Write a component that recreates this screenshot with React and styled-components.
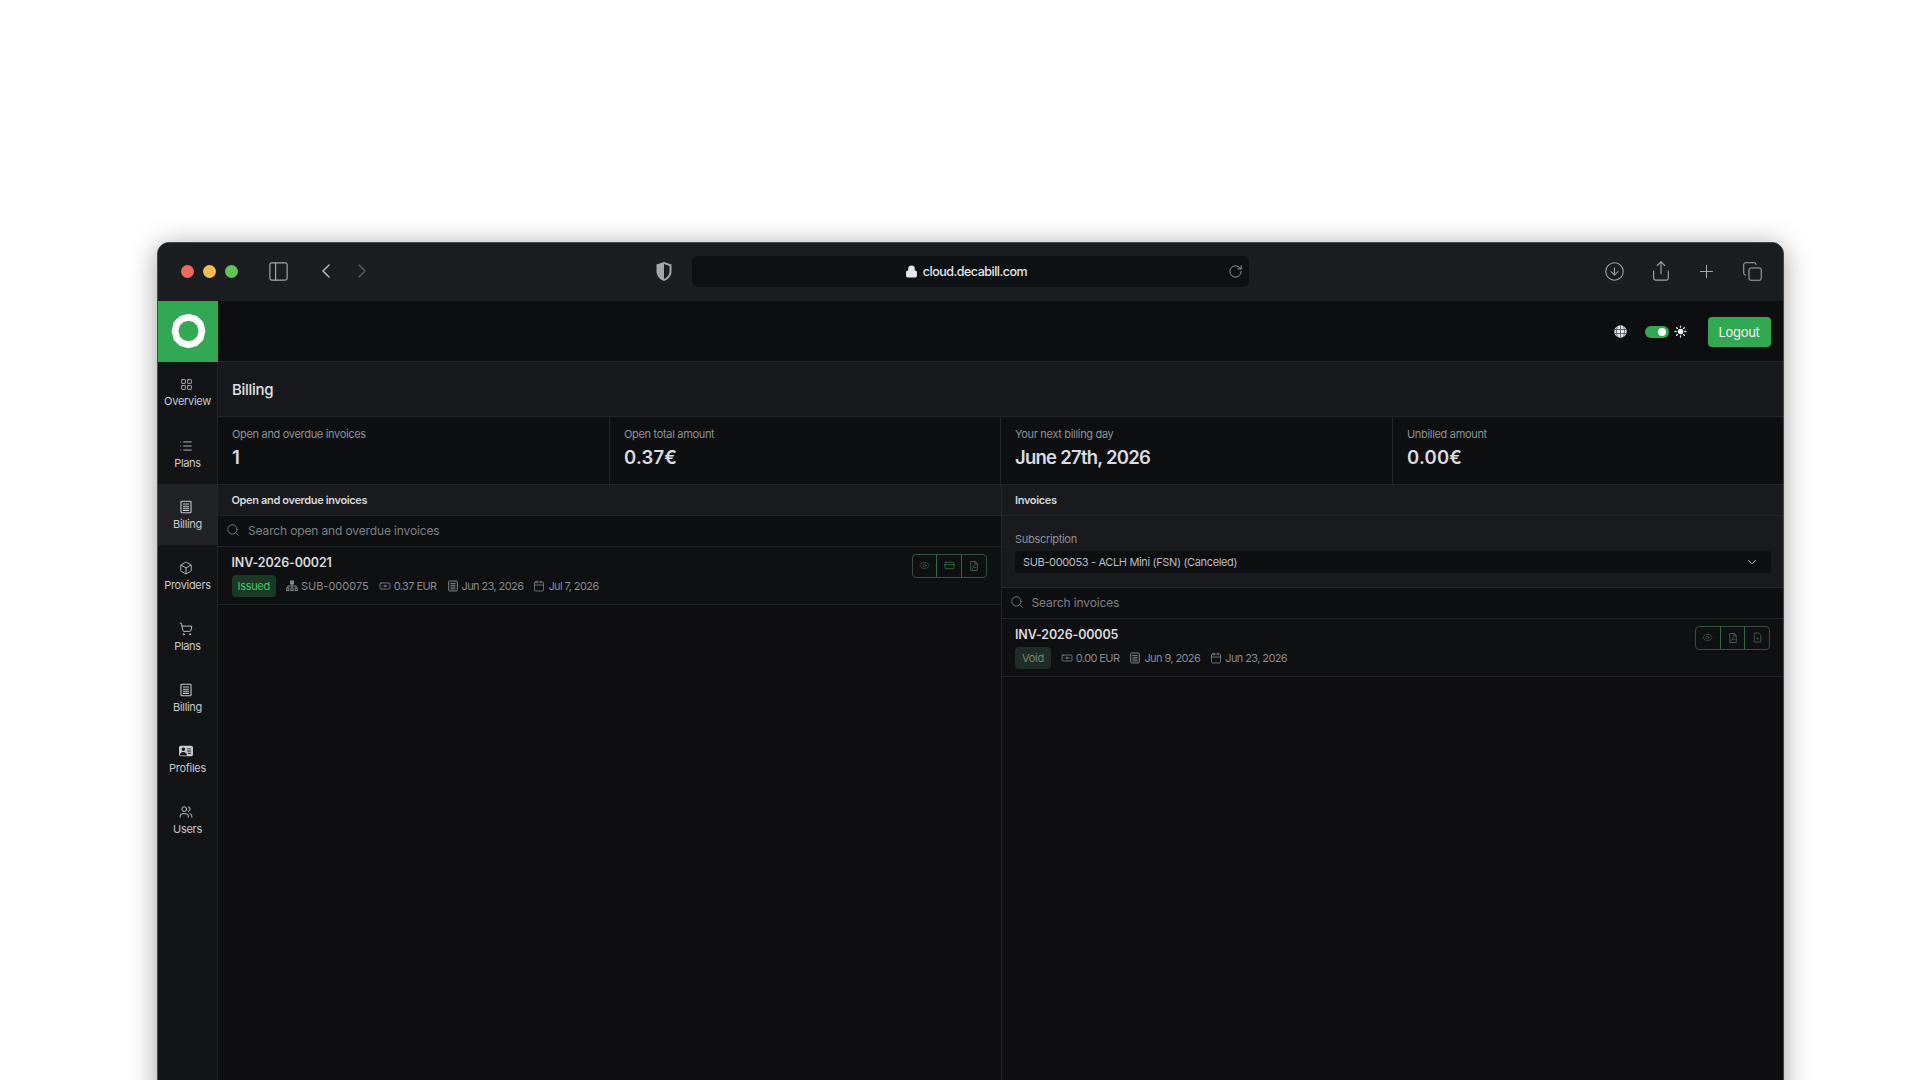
import React from "react";
import styled, { createGlobalStyle } from "styled-components";
import {
  LayoutGrid,
  List,
  Box,
  ShoppingCart,
  Users,
  Search,
  ChevronDown,
  ChevronLeft,
  ChevronRight,
  Eye,
  CreditCard,
  Sun,
  Lock,
  RotateCw,
  CircleArrowDown,
  Share,
  Plus,
  Copy,
  PanelLeft,
  Banknote,
  Calendar,
} from "lucide-react";
import { FaRegFilePdf } from "react-icons/fa";
import { BsPersonVcardFill } from "react-icons/bs";

const GlobalStyle = createGlobalStyle`
  html, body {
    margin: 0;
    padding: 0;
    background: #ffffff;
  }
  * {
    box-sizing: border-box;
  }
  body {
    font-family: Inter, "Liberation Sans", sans-serif;
  }
`;

const Page = styled.div`
  height: 1080px;
  overflow: hidden;
  padding: 242px 136px 0 157px;
  background: #ffffff;
`;

const BrowserWindow = styled.div`
  height: 860px;
  display: flex;
  flex-direction: column;
  background: #0f0f11;
  border: 1.5px solid #46494c;
  border-radius: 12px 12px 0 0;
  box-shadow: 0 4px 28px rgba(0, 0, 0, 0.38);
  overflow: hidden;
`;

const TitleBar = styled.div`
  height: 57.5px;
  flex: none;
  display: flex;
  align-items: center;
  background: #1a1e21;
  color: #a4a8ab;
  padding: 0 20.5px 1px 22.5px;
`;

const Lights = styled.div`
  display: flex;
  gap: 9px;
  margin-right: 29px;
`;

const Light = styled.span`
  width: 13px;
  height: 13px;
  border-radius: 50%;
  background: ${(p) => p.$color};
`;

const NavChevron = styled.span`
  display: flex;
  margin-left: ${(p) => p.$gap}px;
  color: ${(p) => (p.$dim ? "#55595c" : "#b4b8bb")};
`;

const Shield = styled.svg`
  margin-left: 281px;
  margin-right: 19px;
`;

const UrlBar = styled.div`
  width: 557px;
  height: 31px;
  flex: none;
  display: flex;
  align-items: center;
  justify-content: center;
  position: relative;
  gap: 5px;
  padding-right: 8px;
  background: #0e1113;
  border-radius: 6px;
  color: #e4e6e8;
  font-size: 12.5px;
  font-weight: 500;
  letter-spacing: -0.5px;
`;

const Reload = styled.span`
  position: absolute;
  right: 6px;
  top: 8px;
  display: flex;
  color: #a4a8ab;
`;

const TitleActions = styled.div`
  margin-left: auto;
  display: flex;
  align-items: center;
  gap: 24.5px;
`;

const Shell = styled.div`
  flex: 1;
  display: grid;
  grid-template-columns: 60px 1fr;
  min-height: 0;
`;

const Sidebar = styled.aside`
  display: flex;
  flex-direction: column;
  background: #131416;
  border-right: 1px solid #232528;
`;

const LogoTile = styled.div`
  height: 61px;
  margin-right: -1px;
  display: flex;
  align-items: center;
  justify-content: center;
  background: #31a952;
`;

const NavItem = styled.div`
  height: 61px;
  display: flex;
  flex-direction: column;
  align-items: center;
  padding-top: 16px;
  gap: 4px;
  color: #c6c9cd;
  font-size: 11px;
  letter-spacing: -0.3px;
  line-height: 13px;
  background: ${(p) => (p.$active ? "#202225" : "transparent")};

  svg {
    margin-left: -3px;
  }
`;

const Main = styled.main`
  display: flex;
  flex-direction: column;
  min-width: 0;
`;

const TopBar = styled.header`
  height: 61px;
  flex: none;
  display: flex;
  align-items: center;
  justify-content: flex-end;
  padding: 2px 12.5px 0 0;
  background: #0d0e10;
  border-bottom: 1px solid #222427;
`;

const IconSlot = styled.span`
  display: flex;
  color: #eceef0;
  margin-right: ${(p) => p.$gap}px;
`;

const Toggle = styled.span`
  width: 24px;
  height: 12px;
  margin-right: 5px;
  display: flex;
  align-items: center;
  justify-content: flex-end;
  padding-right: 3px;
  border-radius: 6px;
  background: #31a952;

  &::after {
    content: "";
    width: 8px;
    height: 8px;
    border-radius: 50%;
    background: #ffffff;
  }
`;

const LogoutButton = styled.button`
  width: 63px;
  height: 30px;
  border: none;
  border-radius: 4px;
  background: #31a952;
  color: #f2f6f3;
  font-family: inherit;
  font-size: 13px;
  letter-spacing: -0.3px;
`;

const PageHead = styled.div`
  height: 55px;
  flex: none;
  display: flex;
  align-items: center;
  padding: 2px 0 0 14px;
  background: #17191c;
  border-bottom: 1px solid #232528;
  color: #e0e3e6;
  font-size: 15px;
  font-weight: 500;
  letter-spacing: -0.3px;
`;

const Stats = styled.div`
  height: 67px;
  flex: none;
  display: grid;
  grid-template-columns: 392px 391px 392px 1fr;
  background: #0e0f11;
`;

const Stat = styled.div`
  padding: 10px 14px 0;
  border-right: ${(p) => (p.$last ? "none" : "1px solid #232528")};
`;

const StatLabel = styled.div`
  color: #8d9196;
  font-size: 11px;
  line-height: 15px;
  letter-spacing: -0.32px;
`;

const StatValue = styled.div`
  margin-top: 3px;
  color: #d9dde1;
  font-size: 18.5px;
  line-height: 24px;
  font-weight: 600;
  letter-spacing: ${(p) => (p.$tight ? "-0.75px" : "0.2px")};
`;

const Panes = styled.div`
  flex: 1;
  display: grid;
  grid-template-columns: 782.5px 1fr;
  min-height: 0;
`;

const Pane = styled.section`
  display: flex;
  flex-direction: column;
  border-left: ${(p) => (p.$right ? "1px solid #232528" : "none")};
`;

const PaneHead = styled.div`
  height: 32px;
  flex: none;
  display: flex;
  align-items: center;
  padding-left: 13.5px;
  background: #181a1e;
  border-top: 1px solid #232528;
  border-bottom: 1px solid #232528;
  color: #d5d8db;
  font-size: 11px;
  font-weight: 600;
  letter-spacing: -0.35px;
`;

const SearchRow = styled.div`
  height: 31px;
  flex: none;
  display: flex;
  align-items: center;
  gap: 8px;
  padding: 0 0 1px 8px;
  background: #0e0f11;
  border-bottom: 1px solid #232528;
  color: #7c8085;
  font-size: 12px;
  letter-spacing: -0.14px;
`;

const SubscriptionBlock = styled.div`
  height: 72px;
  flex: none;
  padding: 16px 12px 0 13.5px;
  background: #181a1e;
  border-bottom: 1px solid #26282b;
`;

const FieldLabel = styled.div`
  color: #8d9196;
  font-size: 11px;
  line-height: 14px;
  letter-spacing: -0.3px;
`;

const SelectBox = styled.div`
  height: 22px;
  margin-top: 5px;
  display: flex;
  align-items: center;
  justify-content: space-between;
  padding: 0 12px 0 8px;
  background: #0e0f11;
  border-radius: 3px;
  color: #b9bdc1;
  font-size: 11px;
  letter-spacing: -0.35px;
`;

const InvoiceRow = styled.div`
  height: 58px;
  flex: none;
  display: flex;
  justify-content: space-between;
  padding: 8px ${(p) => (p.$right ? 13 : 14)}px 0 13.5px;
  background: #0f1012;
  border-bottom: 1px solid #1f2124;
`;

const InvoiceName = styled.div`
  color: #d7dadd;
  font-size: 12.5px;
  line-height: 16px;
  font-weight: 600;
  letter-spacing: -0.15px;
`;

const MetaLine = styled.div`
  display: flex;
  align-items: center;
  gap: 10px;
  margin-top: 4px;
`;

const Badge = styled.span`
  height: 22px;
  padding: 0 ${(p) => (p.$muted ? 7 : 6)}px;
  display: flex;
  align-items: center;
  border-radius: 4px;
  background: ${(p) => (p.$muted ? "#1f2d26" : "#1b3a26")};
  color: ${(p) => (p.$muted ? "#6f8a76" : "#4fbf6b")};
  font-size: 11px;
  letter-spacing: -0.3px;
`;

const MetaItem = styled.span`
  display: flex;
  align-items: center;
  gap: 3px;
  color: #85898e;
  font-size: 11px;
  letter-spacing: ${(p) => (p.$wide ? "0" : "-0.6px")};
`;

const ActionGroup = styled.div`
  width: 75px;
  height: 24px;
  margin-top: -1px;
  display: flex;
  border: 1px solid #2f5239;
  border-radius: 4px;
`;

const ActionCell = styled.span`
  flex: 1;
  display: flex;
  align-items: center;
  justify-content: center;
  color: ${(p) => (p.$accent ? "#2f8a4a" : "#3f5c48")};
  border-left: ${(p) => (p.$first ? "none" : "1px solid #2f6a3f")};
`;

const LogoRing = () => (
  <svg width="35" height="34" viewBox="0 0 35 34">
    <polygon
      points="17.500,3.200 24.200,5 29.200,9.800 31,17 29.200,24.200 24.200,29 17.500,30.800 10.800,29 5.800,24.200 4,17 5.800,9.800 10.800,5"
      fill="none"
      stroke="#ffffff"
      strokeWidth="6.800"
      strokeLinejoin="round"
    />
  </svg>
);

const BillIcon = ({ size = 14 }) => (
  <svg width={size} height={size} viewBox="0 0 14 14" fill="none" stroke="currentColor" strokeWidth="1.1">
    <rect x="2" y="1.2" width="10" height="11.6" rx="0.8" />
    <path d="M4 4h6M4 6.200h6M4 8.300h6M4 10.400h6" />
  </svg>
);

const SitemapIcon = () => (
  <svg width="12" height="12" viewBox="0 0 12 12" fill="none" stroke="currentColor" strokeWidth="1">
    <rect x="4.500" y="1" width="3" height="3" fill="currentColor" />
    <path d="M6 4v3M1.800 8V6h8.400v2" />
    <rect x="0.700" y="8" width="2.200" height="2.600" />
    <rect x="4.900" y="8" width="2.200" height="2.600" />
    <rect x="9.100" y="8" width="2.200" height="2.600" />
  </svg>
);

const FileDotIcon = () => (
  <svg width="11" height="11" viewBox="0 0 12 12" fill="none" stroke="currentColor" strokeWidth="1">
    <path d="M2.500 1h4.500l2.500 2.500V11h-7z" />
    <circle cx="6" cy="7" r="0.8" fill="currentColor" />
  </svg>
);

const GlobeFilled = () => (
  <svg width="13" height="13" viewBox="0 0 13 13" fill="none">
    <circle cx="6.500" cy="6.500" r="6.200" fill="#dfe2e6" />
    <path
      d="M0.500 4.500h12M0.500 8.500h12M6.500 0.500v12M3.500 1.200c-1.300 3-1.300 7.600 0 10.600M9.500 1.200c1.300 3 1.300 7.600 0 10.600"
      stroke="#3a3d42"
      strokeWidth="0.7"
    />
  </svg>
);

const navItems = [
  { label: "Overview", icon: <LayoutGrid size={13} strokeWidth={1.5} /> },
  { label: "Plans", icon: <List size={14} strokeWidth={1.5} /> },
  { label: "Billing", icon: <BillIcon />, active: true },
  { label: "Providers", icon: <Box size={14} strokeWidth={1.5} /> },
  { label: "Plans", icon: <ShoppingCart size={14} strokeWidth={1.6} /> },
  { label: "Billing", icon: <BillIcon /> },
  { label: "Profiles", icon: <BsPersonVcardFill size={14} /> },
  { label: "Users", icon: <Users size={14} strokeWidth={1.6} /> },
];

function Meta({ icon, wide, children }) {
  return (
    <MetaItem $wide={wide}>
      {icon}
      {children}
    </MetaItem>
  );
}

const cash = <Banknote size={12} strokeWidth={1.6} />;
const bill = <BillIcon size={12} />;
const cal = <Calendar size={12} strokeWidth={1.5} />;

export default function App() {
  return (
    <>
      <GlobalStyle />
      <Page>
        <BrowserWindow>
          <TitleBar>
            <Lights>
              <Light $color="#ee6a5f" />
              <Light $color="#f5bd4f" />
              <Light $color="#61c454" />
            </Lights>
            <PanelLeft size={23} strokeWidth={1.2} />
            <NavChevron $gap={24}>
              <ChevronLeft size={24} strokeWidth={1.5} />
            </NavChevron>
            <NavChevron $gap={12} $dim>
              <ChevronRight size={24} strokeWidth={1.5} />
            </NavChevron>
            <Shield width="18" height="21" viewBox="0 0 18 21">
              <path d="M9 1l7.500 2.500V10c0 5-3.200 8.400-7.500 10C4.700 18.400 1.500 15 1.500 10V3.500z" fill="#a4a8ab" />
              <path d="M9 3v15c3-1.500 5.500-4 5.500-8V5z" fill="#1a1e21" />
            </Shield>
            <UrlBar>
              <Lock size={13} fill="#e4e6e8" strokeWidth={2} />
              cloud.decabill.com
              <Reload>
                <RotateCw size={15} strokeWidth={1.4} />
              </Reload>
            </UrlBar>
            <TitleActions>
              <CircleArrowDown size={21} strokeWidth={1.2} />
              <Share size={22} strokeWidth={1.2} />
              <Plus size={21} strokeWidth={1.2} />
              <Copy size={21} strokeWidth={1.2} />
            </TitleActions>
          </TitleBar>
          <Shell>
            <Sidebar>
              <LogoTile>
                <LogoRing />
              </LogoTile>
              {navItems.map((item, i) => (
                <NavItem key={i} $active={item.active}>
                  {item.icon}
                  {item.label}
                </NavItem>
              ))}
            </Sidebar>
            <Main>
              <TopBar>
                <IconSlot $gap={18}>
                  <GlobeFilled />
                </IconSlot>
                <Toggle />
                <IconSlot $gap={21}>
                  <Sun size={13} strokeWidth={2.4} fill="#eceef0" />
                </IconSlot>
                <LogoutButton>Logout</LogoutButton>
              </TopBar>
              <PageHead>Billing</PageHead>
              <Stats>
                <Stat>
                  <StatLabel>Open and overdue invoices</StatLabel>
                  <StatValue>1</StatValue>
                </Stat>
                <Stat>
                  <StatLabel>Open total amount</StatLabel>
                  <StatValue>0.37€</StatValue>
                </Stat>
                <Stat>
                  <StatLabel>Your next billing day</StatLabel>
                  <StatValue $tight>June 27th, 2026</StatValue>
                </Stat>
                <Stat $last>
                  <StatLabel>Unbilled amount</StatLabel>
                  <StatValue>0.00€</StatValue>
                </Stat>
              </Stats>
              <Panes>
                <Pane>
                  <PaneHead>Open and overdue invoices</PaneHead>
                  <SearchRow>
                    <Search size={14} strokeWidth={1.5} />
                    Search open and overdue invoices
                  </SearchRow>
                  <InvoiceRow>
                    <div>
                      <InvoiceName>INV-2026-00021</InvoiceName>
                      <MetaLine>
                        <Badge>Issued</Badge>
                        <Meta wide icon={<SitemapIcon />}>SUB-000075</Meta>
                        <Meta icon={cash}>0.37 EUR</Meta>
                        <Meta icon={bill}>Jun 23, 2026</Meta>
                        <Meta icon={cal}>Jul 7, 2026</Meta>
                      </MetaLine>
                    </div>
                    <ActionGroup>
                      <ActionCell $first>
                        <Eye size={11} strokeWidth={1.5} />
                      </ActionCell>
                      <ActionCell $accent>
                        <CreditCard size={11} strokeWidth={1.5} />
                      </ActionCell>
                      <ActionCell>
                        <FaRegFilePdf size={10} />
                      </ActionCell>
                    </ActionGroup>
                  </InvoiceRow>
                </Pane>
                <Pane $right>
                  <PaneHead $right>Invoices</PaneHead>
                  <SubscriptionBlock>
                    <FieldLabel>Subscription</FieldLabel>
                    <SelectBox>
                      SUB-000053 - ACLH Mini (FSN) (Canceled)
                      <ChevronDown size={14} strokeWidth={1.6} />
                    </SelectBox>
                  </SubscriptionBlock>
                  <SearchRow>
                    <Search size={14} strokeWidth={1.5} />
                    Search invoices
                  </SearchRow>
                  <InvoiceRow $right>
                    <div>
                      <InvoiceName>INV-2026-00005</InvoiceName>
                      <MetaLine>
                        <Badge $muted>Void</Badge>
                        <Meta icon={cash}>0.00 EUR</Meta>
                        <Meta icon={bill}>Jun 9, 2026</Meta>
                        <Meta icon={cal}>Jun 23, 2026</Meta>
                      </MetaLine>
                    </div>
                    <ActionGroup>
                      <ActionCell $first>
                        <Eye size={11} strokeWidth={1.5} />
                      </ActionCell>
                      <ActionCell>
                        <FaRegFilePdf size={10} />
                      </ActionCell>
                      <ActionCell>
                        <FileDotIcon />
                      </ActionCell>
                    </ActionGroup>
                  </InvoiceRow>
                </Pane>
              </Panes>
            </Main>
          </Shell>
        </BrowserWindow>
      </Page>
    </>
  );
}
